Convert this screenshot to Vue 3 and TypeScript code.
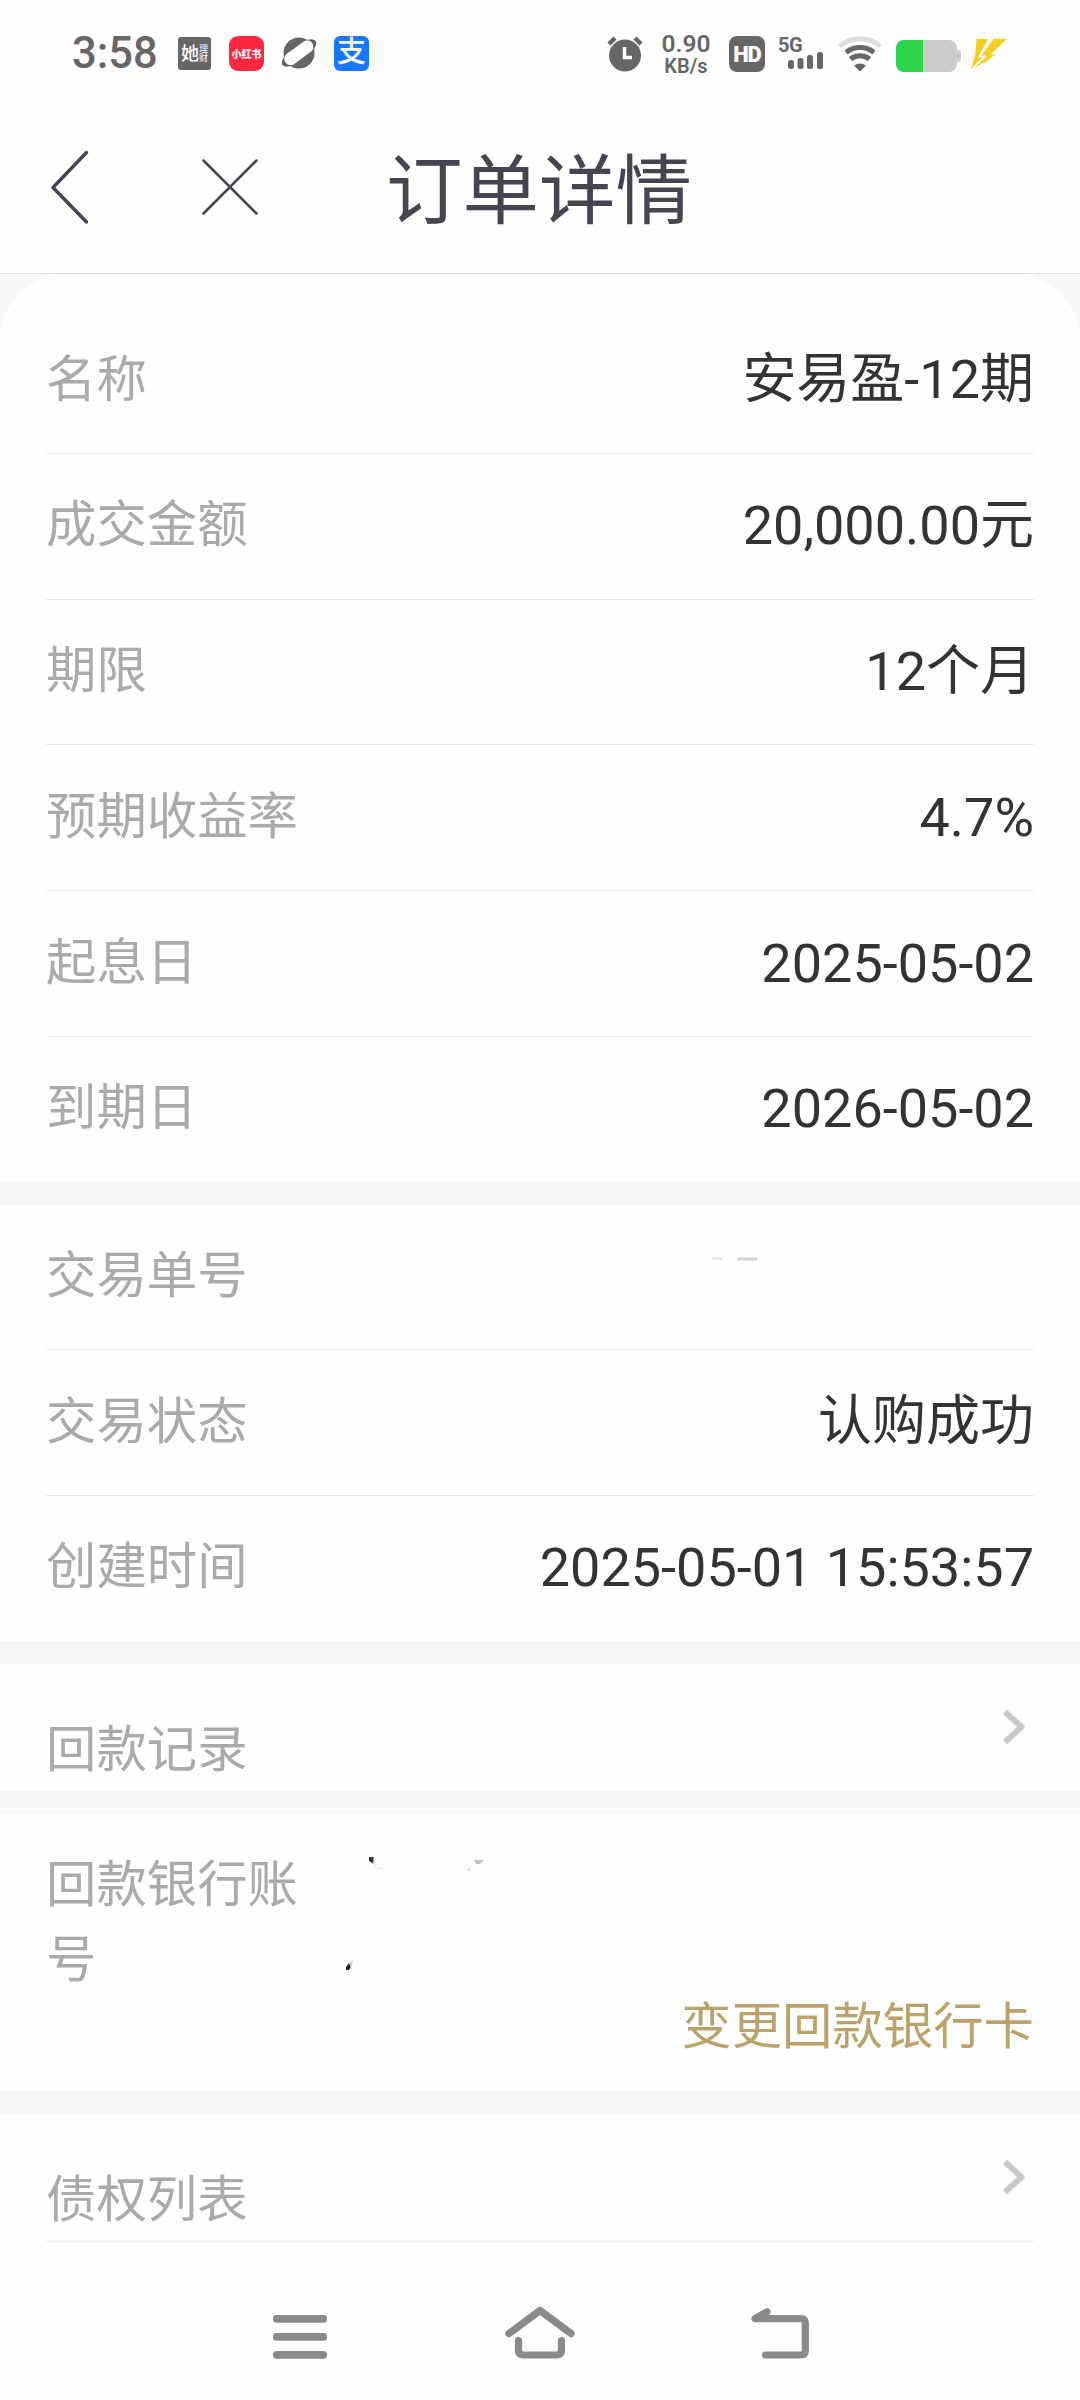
<script setup lang="ts">
interface Row {
  label: string
  value: string
}

const product: Row[] = [
  { label: '名称', value: '安易盈-12期' },
  { label: '成交金额', value: '20,000.00元' },
  { label: '期限', value: '12个月' },
  { label: '预期收益率', value: '4.7%' },
  { label: '起息日', value: '2025-05-02' },
  { label: '到期日', value: '2026-05-02' },
]

const trade: Row[] = [
  { label: '交易单号', value: '' },
  { label: '交易状态', value: '认购成功' },
  { label: '创建时间', value: '2025-05-01 15:53:57' },
]
</script>

<template>
  <div class="page">
    <header class="status">
      <div class="status-left">
        <span class="clock">3:58</span>
        <span class="app ta"><b>她</b><i><em>理</em><em>财</em></i></span>
        <span class="app red">小红书</span>
        <svg class="planet" width="36" height="34" viewBox="0 0 36 34">
          <circle cx="18" cy="17" r="15.5" fill="#666" />
          <ellipse cx="18" cy="17" rx="20.5" ry="8" transform="rotate(-36 18 17)" fill="#666" />
          <rect x="1.5" y="10.5" width="33" height="12.5" rx="6.2" transform="rotate(-36 18 17)" fill="#fff" />
        </svg>
        <span class="app ali">支</span>
      </div>
      <div class="status-right">
        <svg class="alarm" width="36" height="36" viewBox="0 0 36 36">
          <circle cx="18" cy="19.5" r="16" fill="#666" />
          <path d="M2 8 8 2M34 8 28 2" stroke="#666" stroke-width="4.5" />
          <path d="M17.500 11V21.500H25" stroke="#fff" stroke-width="3.500" fill="none" />
        </svg>
        <div class="speed"><span>0.90</span><small>KB/s</small></div>
        <span class="hd">HD</span>
        <div class="signal">
          <span>5G</span>
          <svg width="36" height="17" viewBox="0 0 36 17">
            <g fill="#666">
              <rect x="0" y="8" width="6" height="9" rx="2.500" />
              <rect x="9.500" y="6" width="6" height="11" rx="2.500" />
              <rect x="19" y="3" width="6" height="14" rx="2.500" />
              <rect x="29" y="0" width="6" height="17" rx="2.500" />
            </g>
          </svg>
        </div>
        <svg class="wifi" width="44" height="36" viewBox="0 0 44 36">
          <g fill="none" stroke-width="5">
            <path d="M1.800 10.300A31 31 0 0 1 42.200 10.300" stroke="#ddd" />
            <path d="M8 16.500A22.500 22.500 0 0 1 36 16.500" stroke="#666" />
            <path d="M12.500 23A15.500 15.500 0 0 1 31.500 23" stroke="#666" />
          </g>
          <path d="M16 29.500Q22 25.500 28 29.500L22 35.500Z" fill="#666" />
        </svg>
        <svg class="battery" width="66" height="33" viewBox="0 0 66 33">
          <rect x="57" y="10" width="8" height="12" rx="3" fill="#ccc" />
          <rect x="0" y="0" width="61" height="32" rx="8" fill="#ccc" />
          <path d="M27 0V32H8A8 8 0 0 1 0 24V8A8 8 0 0 1 8 0Z" fill="#2bd548" />
        </svg>
        <svg class="bolt" width="36" height="31" viewBox="0 0 36 31">
          <path d="M5.500 0H17L10 13 7.500 17H13L0 30 4.500 14Z" fill="#f9cd1b" />
          <path d="M22.500 0H36L19.500 15.500H24L16 22 1 30 14 18H9.500Z" fill="#f9cd1b" />
          <path d="M19.800 0 8.500 17.500H14L2.500 28.500" stroke="#fff" stroke-width="1.800" fill="none" />
        </svg>
      </div>
    </header>

    <nav class="titlebar">
      <svg class="back" width="40" height="76" viewBox="0 0 40 76">
        <path d="M36.500 3.500 3 38.500 36.500 73" fill="none" stroke="#454450" stroke-width="3.400" stroke-linecap="round" stroke-linejoin="round" />
      </svg>
      <svg class="close" width="56" height="56" viewBox="0 0 56 56">
        <path d="M1.500 1.500 54.500 54.500M54.500 1.500 1.500 54.500" stroke="#454450" stroke-width="2.500" stroke-linecap="round" />
      </svg>
      <h1>订单详情</h1>
    </nav>

    <main>
      <section class="card first">
        <div v-for="r in product" :key="r.label" class="row">
          <span class="label">{{ r.label }}</span>
          <span class="value">{{ r.value }}</span>
        </div>
      </section>

      <section class="card trade">
        <div v-for="r in trade" :key="r.label" class="row">
          <span class="label">{{ r.label }}</span>
          <span v-if="r.value" class="value">{{ r.value }}</span>
          <svg v-else class="trace" width="50" height="8" viewBox="0 0 50 8">
            <path d="M2 3 7 1.500 12 3.500" fill="none" stroke="#e2e2e2" stroke-width="2" />
            <rect x="27" y="1.500" width="20" height="3" fill="#d2d2d2" />
          </svg>
        </div>
      </section>

      <section class="card link">
        <span class="label">回款记录</span>
        <svg class="chev" width="24" height="36" viewBox="0 0 24 36">
          <path d="M3 3 19.500 18 3 33" fill="none" stroke="#c7c7c7" stroke-width="6" stroke-linejoin="round" />
        </svg>
      </section>

      <section class="card bank">
        <div class="bank-line">
          <span class="label">回款银行账号</span>
          <svg class="marks" width="150" height="120" viewBox="0 0 150 120">
            <path d="M23 2H27.500V9L23 6Z" fill="#333" />
            <path d="M27 7 30 12M32 13 37 14" stroke="#ddd" stroke-width="1" />
            <path d="M128 5H138L134 9H130Z" fill="#c4c4c4" />
            <path d="M120 16 124 12V16Z" fill="#ddd" />
            <path d="M4 108 7 104 5 114H2Z" fill="#ccc" />
            <path d="M0 115V112L3 108 4.500 112 3 115Z" fill="#222" />
          </svg>
        </div>
        <a class="change">变更回款银行卡</a>
      </section>

      <section class="card link last">
        <span class="label">债权列表</span>
        <svg class="chev" width="24" height="36" viewBox="0 0 24 36">
          <path d="M3 3 19.500 18 3 33" fill="none" stroke="#c7c7c7" stroke-width="6" stroke-linejoin="round" />
        </svg>
      </section>
    </main>

    <footer class="sysnav">
      <svg width="54" height="56" viewBox="0 0 54 56">
        <g fill="#8a8a8a">
          <rect y="10" width="54" height="7.700" rx="3.500" />
          <rect y="28" width="54" height="7.700" rx="3.500" />
          <rect y="46" width="54" height="7.700" rx="3.500" />
        </g>
      </svg>
      <svg class="home" width="70" height="56" viewBox="0 0 70 56">
        <g fill="none" stroke="#8a8a8a" stroke-width="7.200" stroke-linecap="round" stroke-linejoin="round">
          <path d="M4 28.500 35 5.500 66 28.500" />
          <path d="M13.500 35.500V45Q13.500 50 18.500 50H51.500Q56.500 50 56.500 45V35.500" />
        </g>
      </svg>
      <svg width="58" height="56" viewBox="0 0 58 56">
        <path d="M16 6.800 4 13.700H50Q54.300 13.700 54.300 18V45.500Q54.300 50 50 50H14.500" fill="none" stroke="#8a8a8a" stroke-width="7.200" stroke-linecap="round" stroke-linejoin="round" />
      </svg>
    </footer>
  </div>
</template>

<style>
body {
  margin: 0;
  background: #fefefe;
}
</style>

<style scoped>
.page {
  width: 1080px;
  height: 2400px;
  display: flex;
  flex-direction: column;
  overflow: hidden;
  background: #fefefe;
  font-family: Roboto, "Noto Sans CJK SC", sans-serif;
}
.status {
  height: 108px;
  display: flex;
  justify-content: space-between;
  color: #666;
  flex: none;
}
.status-left,
.status-right {
  display: flex;
  align-items: flex-start;
}
.status-left {
  padding-left: 72px;
}
.clock {
  width: 106px;
  padding-top: 28px;
  font-size: 43.500px;
  line-height: 52px;
  font-weight: 500;
}
.app {
  display: flex;
  align-items: center;
  justify-content: center;
  color: #fff;
  width: 35px;
  height: 35px;
  margin-top: 36px;
  border-radius: 8px;
  overflow: hidden;
  white-space: nowrap;
}
.ta {
  width: 33px;
  height: 33px;
  margin-top: 37px;
  border-radius: 3px;
  background: #666;
  line-height: 1;
}
.ta b {
  font-size: 18px;
  font-weight: 500;
}
.ta i {
  display: flex;
  flex-direction: column;
  font-style: normal;
}
.ta em {
  font-style: normal;
  font-size: 9px;
  line-height: 9px;
}
.red {
  margin-left: 18px;
  background: #fe2740;
  border-radius: 9px;
  font-size: 10px;
  font-weight: 900;
}
.planet {
  margin: 36px 0 0 17px;
}
.ali {
  margin-left: 17px;
  background: #1677ff;
  border-radius: 6px;
  font-size: 29px;
  line-height: 33px;
  align-items: flex-start;
  font-weight: 500;
}
.status-right {
  padding-right: 73px;
}
.alarm {
  margin-top: 36px;
}
.speed {
  width: 52px;
  margin: 32px 0 0 17px;
  display: flex;
  flex-direction: column;
  align-items: center;
  font-weight: 600;
}
.speed span {
  font-size: 24.500px;
  line-height: 24px;
}
.speed small {
  font-size: 20px;
  line-height: 20px;
}
.hd {
  width: 36px;
  height: 36px;
  margin: 36px 0 0 17px;
  border-radius: 8px;
  background: #666;
  color: #fff;
  font-size: 22px;
  line-height: 37px;
  font-weight: 900;
  letter-spacing: -1px;
  text-align: center;
}
.signal {
  width: 46px;
  margin: 36px 0 0 13px;
  display: flex;
  flex-direction: column;
}
.signal span {
  font-size: 20px;
  line-height: 19px;
  height: 16px;
  font-weight: 700;
  letter-spacing: -0.500px;
}
.signal svg {
  margin-left: 10px;
}
.wifi {
  margin: 36px 0 0 14px;
}
.battery {
  margin: 40px 0 0 14px;
}
.bolt {
  margin: 39px 0 0 9px;
}
.titlebar {
  height: 165px;
  flex: none;
  display: flex;
  align-items: flex-start;
  border-bottom: 1px solid #dfdfdf;
  box-sizing: content-box;
  color: #454450;
}
.back {
  margin: 41px 0 0 50px;
}
.close {
  margin: 51px 0 0 112px;
}
h1 {
  margin: 29px 0 0 128px;
  font-size: 76.500px;
  line-height: 110px;
  font-weight: 400;
}
main {
  display: flex;
  flex-direction: column;
  gap: 23px;
  background: #f7f7f7;
}
.card {
  background: #fefefe;
  padding: 0 46px;
}
.first {
  padding-top: 34.100px;
  border-radius: 66px 66px 0 0;
}
.row {
  height: 145.800px;
  box-sizing: border-box;
  display: flex;
  align-items: center;
  justify-content: space-between;
  border-bottom: 1px solid #e9e9e9;
}
.trade .row {
  height: 145.300px;
}
.row:last-child {
  border-bottom-color: transparent;
}
.first .row:last-child {
  height: 144.900px;
}
.row .label {
  margin-top: -2px;
}
.label {
  color: #aaa;
  font-size: 50.400px;
  line-height: 75.600px;
}
.value {
  color: #333;
  font-size: 54px;
  line-height: 76px;
}
.trace {
  margin: -35px 274px 0 0;
}
.link {
  height: 127px;
  box-sizing: border-box;
  padding-top: 48px;
  display: flex;
  justify-content: space-between;
  align-items: flex-start;
}
.chev {
  margin: -3px 8px 0 0;
}
.bank {
  height: 277px;
  box-sizing: border-box;
  padding-top: 33px;
  display: flex;
  flex-direction: column;
}
.bank-line {
  display: flex;
  height: 142px;
}
.bank .label {
  width: 260px;
}
.marks {
  margin: 8px 0 0 40px;
}
.change {
  align-self: flex-end;
  color: #baa269;
  font-size: 50.400px;
  line-height: 76px;
}
.last {
  height: 128px;
  position: relative;
}
.last::after {
  content: "";
  position: absolute;
  left: 46px;
  right: 46px;
  bottom: 0;
  height: 1px;
  background: #e9e9e9;
}
.sysnav {
  display: flex;
  justify-content: space-between;
  padding: 63px 271px 0 273px;
}
.home {
  margin-left: 2px;
}
</style>
